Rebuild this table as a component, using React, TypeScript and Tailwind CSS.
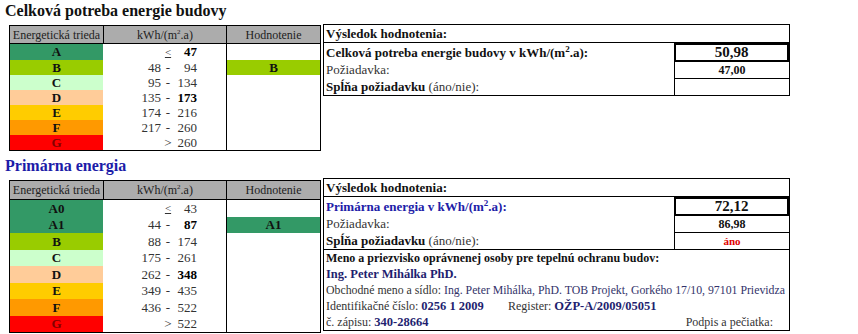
import React from 'react';

type Band = {
  cls: string;
  bg: string;
  fg?: string;
  from?: string;
  op?: string;
  to: string;
  boldTo?: boolean;
};

const TOTAL_BANDS: Band[] = [
  { cls: 'A', bg: 'bg-[#339966]', op: '≤', to: '47', boldTo: true },
  { cls: 'B', bg: 'bg-[#99cc00]', from: '48', op: '-', to: '94' },
  { cls: 'C', bg: 'bg-[#ccffcc]', from: '95', op: '-', to: '134' },
  { cls: 'D', bg: 'bg-[#ffcc99]', from: '135', op: '-', to: '173', boldTo: true },
  { cls: 'E', bg: 'bg-[#ffcc00]', from: '174', op: '-', to: '216' },
  { cls: 'F', bg: 'bg-[#ff9900]', from: '217', op: '-', to: '260' },
  { cls: 'G', bg: 'bg-[#ff0000]', fg: 'text-[#800000]', op: '>', to: '260' },
];

const PRIMARY_BANDS: Band[] = [
  { cls: 'A0', bg: 'bg-[#339966]', op: '≤', to: '43' },
  { cls: 'A1', bg: 'bg-[#339966]', from: '44', op: '-', to: '87', boldTo: true },
  { cls: 'B', bg: 'bg-[#99cc00]', from: '88', op: '-', to: '174' },
  { cls: 'C', bg: 'bg-[#ccffcc]', from: '175', op: '-', to: '261' },
  { cls: 'D', bg: 'bg-[#ffcc99]', from: '262', op: '-', to: '348', boldTo: true },
  { cls: 'E', bg: 'bg-[#ffcc00]', from: '349', op: '-', to: '435' },
  { cls: 'F', bg: 'bg-[#ff9900]', from: '436', op: '-', to: '522' },
  { cls: 'G', bg: 'bg-[#ff0000]', fg: 'text-[#800000]', op: '>', to: '522' },
];

// row heights, so the two tables land on the reference's lines
const TOTAL_ROWS = ['h-[16px]', 'h-[15px]', 'h-[15px]', 'h-[15px]', 'h-[15px]', 'h-[15px]', 'h-[15px]'];
const PRIMARY_ROWS = ['h-[17px]', 'h-[16px]', 'h-[17px]', 'h-[16px]', 'h-[17px]', 'h-[16px]', 'h-[17px]', 'h-[16px]'];

function ClassTable({
  bands,
  rating,
  rows,
  headH,
}: {
  bands: Band[];
  rating: string;
  rows: string[];
  headH: string;
}) {
  return (
    <div className="w-[312px] border border-black">
      <div
        className={`grid ${headH} grid-cols-[93px_124px_93px] border-b border-black bg-[#acacac] text-[12px] text-[#222]`}
      >
        <div className="flex items-center justify-center whitespace-nowrap">Energetická trieda</div>
        <div className="flex items-center justify-center border-x border-black">
          kWh/(m<sup className="text-[7px]">2</sup>.a)
        </div>
        <div className="flex items-center justify-center">Hodnotenie</div>
      </div>
      <div className="grid grid-cols-[93px_124px_93px]">
        <div>
          {bands.map((b, i) => (
            <div
              key={b.cls}
              className={`${rows[i]} ${b.bg} ${b.fg ?? 'text-[#111]'} flex items-center justify-center text-[13px] font-bold`}
            >
              {b.cls}
            </div>
          ))}
        </div>
        <div className="border-r border-black">
          {bands.map((b, i) => (
            <div key={b.cls} className={`${rows[i]} flex items-center text-[13px] text-[#333]`}>
              <span className="w-[58px] text-right">{b.from}</span>
              <span className={`w-[14px] text-center ${b.op === '≤' ? 'text-[11px] underline' : ''}`}>
                {b.op === '≤' ? '<' : b.op}
              </span>
              <span className={`w-[22px] text-right ${b.boldTo ? 'font-bold text-black' : ''}`}>{b.to}</span>
            </div>
          ))}
        </div>
        <div>
          {bands.map((b, i) => (
            <div
              key={b.cls}
              className={`${rows[i]} flex items-center justify-center text-[13px] font-bold text-[#111] ${
                b.cls === rating ? b.bg : ''
              }`}
            >
              {b.cls === rating ? b.cls : ''}
            </div>
          ))}
        </div>
      </div>
    </div>
  );
}

function ResultRows({
  label,
  labelColor,
  value,
  required,
  passes,
}: {
  label: string;
  labelColor: string;
  value: string;
  required: string;
  passes: string;
}) {
  return (
    <>
      <div className="flex h-[18px] items-center border-b border-black pl-[2px] text-[13px] font-bold text-[#111]">
        Výsledok hodnotenia:
      </div>
      <div className="flex h-[19px]">
        <div className={`flex flex-1 items-center pl-[2px] text-[13px] font-bold ${labelColor}`}>
          <span>
            {label} v kWh/(m<sup className="text-[9px]">2</sup>.a):
          </span>
        </div>
        <div className="flex w-[115px] items-center justify-center border-2 border-black text-[15px] font-bold text-[#111]">
          {value}
        </div>
      </div>
      <div className="flex h-[16px]">
        <div className="flex flex-1 items-center pl-[2px] text-[13px] text-[#333]">Požiadavka:</div>
        <div className="flex w-[115px] items-center justify-center border-l border-black text-[12px] font-bold text-[#111]">
          {required}
        </div>
      </div>
      <div className="flex h-[17px]">
        <div className="flex flex-1 items-center pl-[2px] text-[13px] text-[#333]">
          <span>
            <span className="font-bold text-[#111]">Spĺňa požiadavku</span> (áno/nie):
          </span>
        </div>
        <div className="flex w-[115px] items-center justify-center border-l border-t border-black text-[11px] font-bold text-[#e00000]">
          {passes}
        </div>
      </div>
    </>
  );
}

export default function App() {
  return (
    <div className="h-[334px] w-[858px] overflow-hidden bg-white [font-family:Liberation_Serif,serif]">
      <h2 className="h-[25px] pl-[5px] text-[16px] font-bold leading-[22px] text-[#111]">
        Celková potreba energie budovy
      </h2>
      <div className="flex items-start gap-[2px] pl-[9px]">
        <ClassTable bands={TOTAL_BANDS} rating="B" rows={TOTAL_ROWS} headH="h-[18px]" />
        <div className="-mt-px w-[467px] border border-black">
          <ResultRows
            label="Celková potreba energie budovy"
            labelColor="text-[#111]"
            value="50,98"
            required="47,00"
            passes=""
          />
        </div>
      </div>

      <h2 className="h-[29px] pl-[5px] text-[16px] font-bold leading-[29px] text-[#1c1ca8]">Primárna energia</h2>
      <div className="flex items-start gap-[2px] pl-[9px]">
        <ClassTable bands={PRIMARY_BANDS} rating="A1" rows={PRIMARY_ROWS} headH="h-[19px]" />
        <div className="-mt-[2px] w-[467px] border border-black">
          <ResultRows
            label="Primárna energia"
            labelColor="text-[#2020a8]"
            value="72,12"
            required="86,98"
            passes="áno"
          />
          <div className="border-t border-black px-[2px] text-[12px] leading-[16px] text-[#333]">
            <div className="font-bold text-[#111]">Meno a priezvisko oprávnenej osoby pre tepelnú ochranu budov:</div>
            <div className="text-[12.5px] font-bold text-[#1f1f70]">Ing. Peter Mihálka PhD.</div>
            <div className="whitespace-nowrap text-[11.8px]">
              Obchodné meno a sídlo:{' '}
              <span className="text-[#33336a]">
                Ing. Peter Mihálka, PhD. TOB Projekt, Gorkého 17/10, 97101 Prievidza
              </span>
            </div>
            <div className="flex">
              <span className="w-[182px]">
                Identifikačné číslo: <span className="text-[12.5px] font-bold text-[#1f1f70]">0256 1 2009</span>
              </span>
              <span>
                Register: <span className="text-[12.5px] font-bold text-[#1f1f70]">OŽP-A/2009/05051</span>
              </span>
            </div>
            <div className="flex justify-between pr-[14px]">
              <span>
                č. zápisu: <span className="text-[12.5px] font-bold text-[#1f1f70]">340-28664</span>
              </span>
              <span>Podpis a pečiatka:</span>
            </div>
          </div>
        </div>
      </div>
    </div>
  );
}
